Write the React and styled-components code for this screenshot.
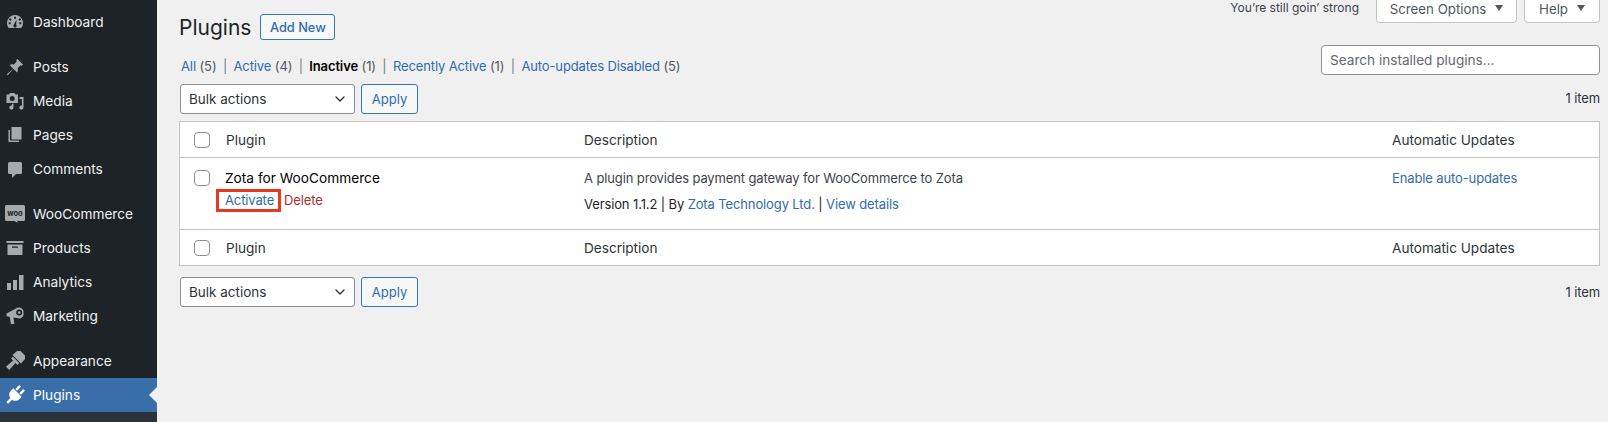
import React from 'react';
import styled, { createGlobalStyle } from 'styled-components';
import { ChevronDown } from 'lucide-react';

const GlobalStyle = createGlobalStyle`
  html, body {
    margin: 0;
    height: 100%;
    background: #f0f0f1;
    overflow: hidden;
  }
  body, select, input {
    font-family: Inter, "Liberation Sans", sans-serif;
    font-size: 13px;
    letter-spacing: -0.12px;
    color: #2c3338;
    -webkit-font-smoothing: antialiased;
  }
  * {
    box-sizing: border-box;
  }
`;

const Page = styled.div`
  display: flex;
  height: 422px;
  overflow: hidden;
`;

const Sidebar = styled.nav`
  flex: 0 0 157px;
  background: #1d2327;
  padding-top: 5px;
`;

const MenuGroup = styled.div`
  margin-bottom: 11px;
`;

const MenuItem = styled.div`
  position: relative;
  display: flex;
  align-items: center;
  height: 34px;
  padding: 0 0 1px 5px;
  gap: 8px;
  font-size: 13.7px;
  letter-spacing: 0;
  color: ${prop => (prop.$active ? '#fff' : '#f0f0f1')};
  background: ${prop => (prop.$active ? '#3a6ea9' : 'transparent')};

  svg {
    flex: 0 0 20px;
    color: ${prop => (prop.$active ? '#fff' : '#a7aaad')};
  }
`;

const ActiveArrow = styled.span`
  position: absolute;
  right: 0;
  top: 9px;
  border: 8px solid transparent;
  border-right-color: #f0f0f1;
  border-left-width: 0;
`;

const SubMenu = styled.div`
  height: 100%;
  background: #2c3338;
`;

const Main = styled.main`
  flex: 1;
  padding: 0 8px 0 22px;
  min-width: 0;
`;

const TopArea = styled.div`
  display: flex;
  justify-content: space-between;
  height: 121px;
`;

const TopLeft = styled.div`
  padding-top: 14px;
`;

const TitleRow = styled.div`
  display: flex;
  align-items: center;
  gap: 9px;
  height: 26px;
`;

const Title = styled.h1`
  margin: 0;
  font-size: 21px;
  font-weight: 400;
  letter-spacing: 0;
  color: #1d2327;
`;

const AddNew = styled.a`
  display: flex;
  align-items: center;
  justify-content: center;
  width: 75px;
  height: 26px;
  font-size: 12.8px;
  font-weight: 500;
  letter-spacing: 0;
  color: #2f6cab;
  background: #f6f7f7;
  border: 1px solid #3a74b0;
  border-radius: 3px;
`;

const Filters = styled.ul`
  display: flex;
  align-items: center;
  list-style: none;
  margin: 16px 0 8px;
  padding: 0 0 0 2px;
  height: 20px;
  line-height: 20px;
`;

const FilterItem = styled.li`
  color: #50575e;

  &:not(:last-child)::after {
    content: '|';
    margin: 0 6.4px;
    color: #787c82;
  }
`;

const FilterLink = styled.a`
  color: ${prop => (prop.$current ? '#000' : '#2f6cab')};
  font-weight: ${prop => (prop.$current ? 600 : 400)};
`;

const ActionBar = styled.div`
  display: flex;
  align-items: center;
  gap: 6px;
  margin-top: ${prop => prop.$top || 0}px;
`;

const SelectWrap = styled.div`
  position: relative;
  width: 175px;
  height: 30px;
  margin-left: 1px;

  svg {
    position: absolute;
    right: 7px;
    top: 7px;
    color: #2c3338;
    pointer-events: none;
  }
`;

const Select = styled.select`
  appearance: none;
  width: 100%;
  height: 100%;
  padding: 0 24px 0 8px;
  background: #fff;
  border: 1px solid #8c8f94;
  border-radius: 3px;
  font-size: 13.5px;
  letter-spacing: 0;
  color: #2c3338;
`;

const ApplyButton = styled.button`
  width: 57px;
  height: 30px;
  padding: 0;
  font-family: inherit;
  font-size: 13px;
  color: #2f6cab;
  background: #f6f7f7;
  border: 1px solid #3a74b0;
  border-radius: 3px;
`;

const TopRight = styled.div`
  display: flex;
  flex-direction: column;
  align-items: flex-end;
`;

const MetaRow = styled.div`
  display: flex;
  height: 23px;
`;

const Dolly = styled.span`
  font-size: 12px;
  line-height: 16px;
  letter-spacing: 0;
  margin-right: 17px;
  color: #3c434a;
`;

const MetaTab = styled.button`
  display: flex;
  align-items: center;
  justify-content: center;
  gap: 9px;
  width: ${prop => prop.$width}px;
  height: 23px;
  margin-left: ${prop => prop.$gap || 0}px;
  padding: 0 0 5px;
  font-family: inherit;
  font-size: 13.3px;
  letter-spacing: 0;
  color: #50575e;
  background: #fff;
  border: 1px solid #c3c4c7;
  border-top: 0;
  border-radius: 0 0 4px 4px;

  &::after {
    content: '';
    border: 4px solid transparent;
    border-top: 6px solid #50575e;
    border-bottom: 0;
    margin-bottom: 1px;
  }
`;

const SearchInput = styled.input`
  width: 279px;
  height: 30px;
  margin-top: 22px;
  padding: 0 8px;
  background: #fff;
  border: 1px solid #8c8f94;
  border-radius: 4px;
  font-size: 13.6px;
  letter-spacing: 0;

  &::placeholder {
    color: #646970;
    opacity: 1;
  }
`;

const ItemCount = styled.span`
  line-height: 20px;
  color: #2c3338;
`;

const TopCount = styled(ItemCount)`
  margin-top: 13px;
`;

const BottomCount = styled(ItemCount)`
  margin-left: auto;
`;

const Table = styled.div`
  background: #fff;
  border: 1px solid #c3c4c7;
`;

const Row = styled.div`
  display: grid;
  grid-template-columns: 45px 359px 808px 1fr;
  align-items: ${prop => (prop.$body ? 'start' : 'center')};
  height: ${prop => prop.$height}px;
  padding-top: ${prop => (prop.$body ? 10 : 0)}px;
  line-height: 20px;
  border-bottom: ${prop => (prop.$last ? 0 : '1px solid #c3c4c7')};
`;

const CheckCell = styled.div`
  display: flex;
  padding-left: 14px;
  padding-top: ${prop => (prop.$body ? 2 : 0)}px;
`;

const Checkbox = styled.span`
  display: block;
  width: 16px;
  height: 16px;
  background: #fff;
  border: 1px solid #8c8f94;
  border-radius: 4px;
`;

const HeadCell = styled.div`
  font-size: 13.6px;
  letter-spacing: 0;
  color: #2c3338;
  padding-left: ${prop => prop.$indent || 0}px;
`;

const PluginName = styled.div`
  font-size: 13.7px;
  font-weight: 400;
  letter-spacing: 0;
  line-height: 20px;
  color: #000;
`;

const RowActions = styled.div`
  display: flex;
  align-items: center;
  margin-top: 1px;
  line-height: 20px;
`;

const ActivateMark = styled.span`
  display: inline-flex;
  align-items: center;
  height: 23px;
  margin-left: -9px;
  padding: 0 4px 1px 6px;
  border: 3px solid #e8391d;
  color: #2f6cab;
`;

const DeleteLink = styled.a`
  margin-left: 3px;
  margin-bottom: 1px;
  color: #b32d2e;
`;

const Description = styled.p`
  margin: 0;
  line-height: 20px;
  color: #3c434a;
`;

const Version = styled.div`
  margin-top: 6px;
  line-height: 20px;
  color: #1d2327;
`;

const TextLink = styled.a`
  color: #2f6cab;
`;

const Icons = {
  dashboard: (
    <path d="M10 3a8 8 0 0 0-8 8c0 1.900.7 3.700 1.800 5h12.400A8 8 0 0 0 10 3zM9 4.700h2v2H9zM5.100 6.100l1.500 1.400-1.400 1.400-1.400-1.400zm9.800 0 1.300 1.400-1.400 1.400-1.400-1.400zM3.700 10.200h2v2h-2zm10.600 0h2v2h-2zM11.500 7.500l-.3 5.200a1.700 1.700 0 1 1-2.400 0z" fillRule="evenodd" />
  ),
  posts: (
    <path d="M12.500 2l5.500 5.500-1.500 1.400-1-.6-2.900 2.900c.6 1.600.4 3.100-.6 4.300L8.300 11.800 2.800 18.200l-1-1 6.400-5.500-3.600-3.600c1.200-1 2.700-1.200 4.300-.6l2.900-2.900-.7-1z" />
  ),
  media: (
    <path d="M1.500 3.500H4L5 2h4.500l1 1.500H13V12H1.500zM7.200 5a2.500 2.500 0 1 0 0 5 2.500 2.500 0 0 0 0-5zM14.500 6H18.500v10.500a2.100 2.100 0 1 1-1.600-2V8h-2.400zM8.500 12.800v3.700a2.100 2.100 0 1 1-1.600-2v-1.700z" fillRule="evenodd" />
  ),
  pages: (
    <path d="M6.500 2h10v12.500h-10zM3.500 5H5v10.500h9V17H3.500z" />
  ),
  comments: (
    <path d="M4.500 3h11A1.500 1.500 0 0 1 17 4.500v9a1.500 1.500 0 0 1-1.500 1.500H11l-4 4v-4H4.500A1.500 1.500 0 0 1 3 13.500v-9A1.500 1.500 0 0 1 4.500 3z" />
  ),
  products: (
    <path d="M1.500 3h17v2h-17zM2.500 6.500h15V17h-15zM7 8.500v1.300h6V8.500z" fillRule="evenodd" />
  ),
  analytics: (
    <path d="M2 11h4v7H2zM8 8h4v10H8zM14 3h4.500v15H14z" />
  ),
  marketing: (
    <path d="M14 1.500a4.500 4.500 0 0 1 4.500 5.500 4.500 4.500 0 0 1-4 5.500L8.500 11.500 9.300 18H5.800L4.800 11 1.500 10V7.500l9.500-5a4.500 4.500 0 0 1 3-1zm.2 2.100a3 3 0 0 0 0 6 3 3 0 0 0 0-6zm0 1.700a1.300 1.300 0 1 1 0 2.600 1.300 1.300 0 0 1 0-2.600z" fillRule="evenodd" />
  ),
  appearance: (
    <g transform="rotate(45 10 10)">
      <path d="M4.500-1h11l.5 8.500H4zM5.500 8.500h9v2.500h-9zM8.300 11h3.400l.6 9.500H7.700z" />
    </g>
  ),
  plugins: (
    <g transform="rotate(45 10 10)">
      <path d="M6 0h2.400v5.500H6zM11.600 0H14v5.500h-2.400zM4 6.500h12v3a6 6 0 0 1-4.800 5.900V21H8.800v-5.600A6 6 0 0 1 4 9.500z" />
    </g>
  )
};

const MenuIcon = ({ name }) => (
  <svg width="20" height="20" viewBox="0 0 20 20" fill="currentColor">
    {Icons[name]}
  </svg>
);

const WooIcon = () => (
  <svg width="20" height="20" viewBox="0 0 20 20">
    <path
      d="M1.500 1h17A1.500 1.500 0 0 1 20 2.500v13a1.500 1.500 0 0 1-1.500 1.500H12l1 2-3.500-2h-8A1.500 1.500 0 0 1 0 15.500v-13A1.500 1.500 0 0 1 1.500 1z"
      fill="currentColor"
    />
    <text x="10" y="11.500" textAnchor="middle" fontSize="7.500" fontWeight="700" fill="#1d2327">
      woo
    </text>
  </svg>
);

const menu = [
  [{ label: 'Dashboard', icon: 'dashboard' }],
  [
    { label: 'Posts', icon: 'posts' },
    { label: 'Media', icon: 'media' },
    { label: 'Pages', icon: 'pages' },
    { label: 'Comments', icon: 'comments' }
  ],
  [
    { label: 'WooCommerce', icon: 'woo' },
    { label: 'Products', icon: 'products' },
    { label: 'Analytics', icon: 'analytics' },
    { label: 'Marketing', icon: 'marketing' }
  ]
];

const filters = [
  { label: 'All', count: 5 },
  { label: 'Active', count: 4 },
  { label: 'Inactive', count: 1, current: true },
  { label: 'Recently Active', count: 1 },
  { label: 'Auto-updates Disabled', count: 5 }
];

const BulkActions = () => (
  <SelectWrap>
    <Select defaultValue="bulk">
      <option value="bulk">Bulk actions</option>
    </Select>
    <ChevronDown size={16} strokeWidth={2} />
  </SelectWrap>
);

const HeadRow = ({ last }) => (
  <Row $height={last ? 35 : 36} $last={last}>
    <CheckCell>
      <Checkbox />
    </CheckCell>
    <HeadCell $indent={1}>Plugin</HeadCell>
    <HeadCell>Description</HeadCell>
    <HeadCell>Automatic Updates</HeadCell>
  </Row>
);

const App = () => (
  <Page>
    <GlobalStyle />
    <Sidebar>
      {menu.map((group, i) => (
        <MenuGroup key={i}>
          {group.map(item => (
            <MenuItem key={item.label}>
              {item.icon === 'woo' ? <WooIcon /> : <MenuIcon name={item.icon} />}
              {item.label}
            </MenuItem>
          ))}
        </MenuGroup>
      ))}
      <MenuItem>
        <MenuIcon name="appearance" />
        Appearance
      </MenuItem>
      <MenuItem $active>
        <MenuIcon name="plugins" />
        Plugins
        <ActiveArrow />
      </MenuItem>
      <SubMenu />
    </Sidebar>

    <Main>
      <TopArea>
        <TopLeft>
          <TitleRow>
            <Title>Plugins</Title>
            <AddNew>Add New</AddNew>
          </TitleRow>
          <Filters>
            {filters.map(f => (
              <FilterItem key={f.label}>
                <FilterLink $current={f.current}>{f.label}</FilterLink> ({f.count})
              </FilterItem>
            ))}
          </Filters>
          <ActionBar>
            <BulkActions />
            <ApplyButton>Apply</ApplyButton>
          </ActionBar>
        </TopLeft>
        <TopRight>
          <MetaRow>
            <Dolly>You’re still goin’ strong</Dolly>
            <MetaTab $width={141}>Screen Options</MetaTab>
            <MetaTab $width={76} $gap={7}>Help</MetaTab>
          </MetaRow>
          <SearchInput placeholder="Search installed plugins..." />
          <TopCount>1 item</TopCount>
        </TopRight>
      </TopArea>

      <Table>
        <HeadRow />
        <Row $body $height={72}>
          <CheckCell $body>
            <Checkbox />
          </CheckCell>
          <div>
            <PluginName>Zota for WooCommerce</PluginName>
            <RowActions>
              <ActivateMark>Activate</ActivateMark>
              <DeleteLink>Delete</DeleteLink>
            </RowActions>
          </div>
          <div>
            <Description>A plugin provides payment gateway for WooCommerce to Zota</Description>
            <Version>
              Version 1.1.2 | By <TextLink>Zota Technology Ltd.</TextLink> | <TextLink>View details</TextLink>
            </Version>
          </div>
          <TextLink>Enable auto-updates</TextLink>
        </Row>
        <HeadRow last />
      </Table>

      <ActionBar $top={11}>
        <BulkActions />
        <ApplyButton>Apply</ApplyButton>
        <BottomCount>1 item</BottomCount>
      </ActionBar>
    </Main>
  </Page>
);

export default App;
